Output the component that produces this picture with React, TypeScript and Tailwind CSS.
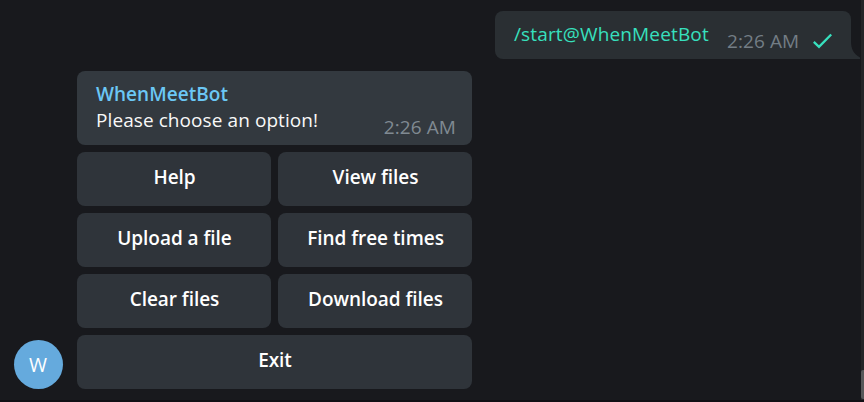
const rows: string[][] = [
  ["Help", "View files"],
  ["Upload a file", "Find free times"],
  ["Clear files", "Download files"],
  ["Exit"],
];

function OutgoingMessage() {
  return (
    <div className="relative ml-auto flex h-12 w-[356px] rounded-l-[8px] rounded-tr-[8px] bg-[#2a2f33] pl-[19px]">
      <span className="mt-[10px] w-[213px] text-[19px] leading-[26px] tracking-[0.15px] text-[#37e0be]">/start@WhenMeetBot</span>
      <span className="mt-[17px] w-[86px] text-[19px] leading-[26px] tracking-[0.08px] text-[#737d85]">2:26 AM</span>
      <svg className="mt-[22px] h-[16px] w-[20px]" viewBox="0 0 20 16" fill="none">
        <path d="M0.8 8.8 L6 13.8 L18.2 1.5" stroke="#37e0be" strokeWidth="2.3" />
      </svg>
      <svg className="absolute bottom-0 left-full h-[18px] w-[9px]" viewBox="0 0 9 18">
        <path d="M0 0 C0 8 2.5 13 9 16.5 V18 H0 Z" fill="#2a2f33" />
      </svg>
    </div>
  );
}

function IncomingMessage() {
  return (
    <div className="flex h-[74px] justify-between rounded-[8px] bg-[#33393f] pr-4 pl-[19px]">
      <div className="pt-[10px] text-[19px] leading-[26px]">
        <div className="font-semibold tracking-[0.03px] text-[#6bc7f5]">WhenMeetBot</div>
        <div className="tracking-[0.08px] text-[#f8f8f8]">Please choose an option!</div>
      </div>
      <span className="mt-[43px] text-[19px] leading-[26px] tracking-[0.08px] text-[#808a92]">2:26 AM</span>
    </div>
  );
}

export default function App() {
  return (
    <div className="flex h-[402px] w-[864px] overflow-hidden border-b-2 border-[#100f14] bg-[#18191d] font-['Open_Sans','Noto_Sans',sans-serif] whitespace-nowrap">
      <main className="flex-1 pt-[11px]">
        <div className="pr-[10px]">
          <OutgoingMessage />
        </div>
        <div className="mt-3 flex items-end gap-[14px] pl-[14px]">
          <div className="flex h-[49px] w-[49px] items-center justify-center rounded-full bg-[#65aadd] pt-px pr-px text-[19.5px] font-medium text-white">
            W
          </div>
          <div className="flex w-[395px] flex-col gap-[7px]">
            <IncomingMessage />
            {rows.map((row) => (
              <div key={row[0]} className="flex gap-[7px]">
                {row.map((label) => (
                  <button
                    key={label}
                    className="h-[54px] flex-1 basis-0 rounded-[8px] bg-[#2f343a] pb-[4px] pl-px text-[19px] leading-[26px] font-semibold tracking-[-0.04px] text-white"
                  >
                    {label}
                  </button>
                ))}
              </div>
            ))}
          </div>
        </div>
      </main>
      <div className="h-full w-[3px] bg-[#242528] pt-[370px]">
        <div className="h-[29px] rounded-l-[2px] bg-[#57585a]" />
      </div>
    </div>
  );
}
